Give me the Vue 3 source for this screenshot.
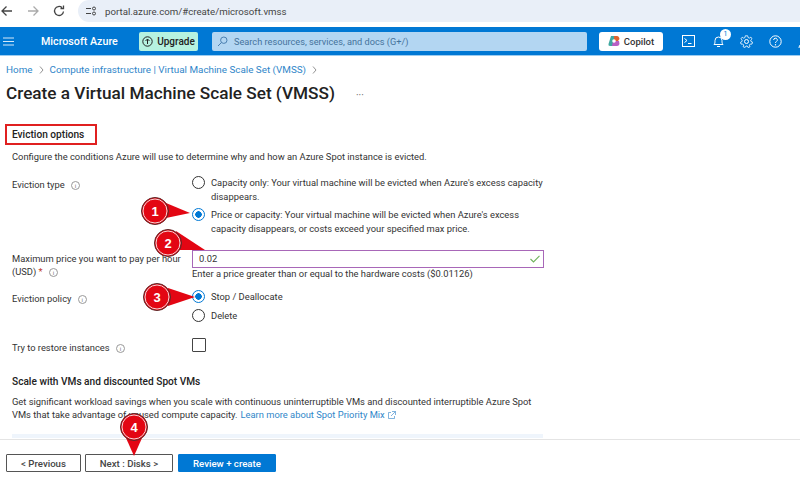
<script setup>
const crumbs = ['Home', 'Compute infrastructure | Virtual Machine Scale Set (VMSS)']
const callouts = [
  { n: 1, cx: 155, cy: 211, arrow: '166,203 190,213 166,218' },
  { n: 2, cx: 168, cy: 243, arrow: '176,231 205,250 178,250' },
  { n: 3, cx: 157, cy: 297, arrow: '168,288 195,297 168,306' },
  { n: 4, cx: 134, cy: 427, arrow: '126,438 134,456 142,438' },
]
</script>

<template>
  <div class="page">
    <div class="browser">
      <svg width="14" height="14" viewBox="0 0 14 14"><path d="M12 7H2M6.500 2.500 2 7l4.500 4.500" fill="none" stroke="#444" stroke-width="1.300" /></svg>
      <svg width="14" height="14" viewBox="0 0 14 14"><path d="M2 7h10M7.500 2.500 12 7l-4.500 4.500" fill="none" stroke="#aaa" stroke-width="1.300" /></svg>
      <svg width="14" height="14" viewBox="0 0 14 14"><path d="M11.500 7.500A4.500 4.500 0 1 1 10 3.600M11.500 1.500v3h-3" fill="none" stroke="#444" stroke-width="1.300" /></svg>
      <div class="address">
        <svg width="12" height="12" viewBox="0 0 12 12"><path d="M1 3.500h5M1 8.500h5" stroke="#444" stroke-width="1.200" /><circle cx="9" cy="3.500" r="1.500" fill="none" stroke="#444" /><circle cx="9" cy="8.500" r="1.500" fill="none" stroke="#444" /></svg>
        <span>portal.azure.com/#create/microsoft.vmss</span>
      </div>
    </div>

    <header class="topbar">
      <svg class="menu" width="11" height="9" viewBox="0 0 11 9"><path d="M0 1h11M0 4.500h11M0 8h11" stroke="#d5e8f8" stroke-width="1" /></svg>
      <div class="brand">Microsoft Azure</div>
      <div class="upgrade">
        <svg width="11" height="11" viewBox="0 0 11 11"><circle cx="5.500" cy="5.500" r="4.700" fill="none" stroke="#222" /><path d="M5.500 8V3.200M3.500 5l2-2 2 2" fill="none" stroke="#222" /></svg>
        Upgrade
      </div>
      <div class="search">
        <svg width="11" height="11" viewBox="0 0 11 11"><circle cx="6.800" cy="4.200" r="3.200" fill="none" stroke="#4a7fb0" /><path d="M4.500 6.500 1 10" stroke="#4a7fb0" /></svg>
        Search resources, services, and docs (G+/)
      </div>
      <div class="copilot">
        <svg width="12" height="12" viewBox="0 0 12 12">
          <path d="M3 1h4L5 11H2Q0 11 .500 9Z" fill="#3fa8a0" />
          <path d="M6 1h3q2 0 2.500 3L10 6H6Z" fill="#e0632e" />
          <path d="M5 6h6l.500 3Q11 11 9 11H4Z" fill="#b85fc4" />
          <circle cx="6" cy="6" r="1.800" fill="#fff" />
        </svg>
        Copilot
      </div>
      <div class="tools">
        <svg width="13" height="12" viewBox="0 0 13 12"><rect x=".5" y=".5" width="12" height="11" fill="none" stroke="#fff" /><path d="m2.500 3.500 2.500 2-2.500 2M6 8.500h3.500" fill="none" stroke="#fff" /></svg>
        <div class="bell">
          <svg width="11" height="13" viewBox="0 0 11 13"><path d="M1 9.500c1-1 1-2 1-4a3.500 3.500 0 0 1 7 0c0 2 0 3 1 4ZM4 11.500h3" fill="none" stroke="#fff" /></svg>
          <span class="badge">1</span>
        </div>
        <svg width="13" height="13" viewBox="0 0 13 13"><circle cx="6.500" cy="6.500" r="2" fill="none" stroke="#fff" /><path d="M5.300.8h2.400l.3 1.700 1.400.6 1.500-1 1.100 1.700-1.300 1.300.3 1.400 1.500.6-.5 2-1.700-.1-.9 1.200.6 1.600-2 .7-.8-1.500H6l-.9 1.500-2-.8.6-1.600-1-1.100-1.700.1L.5 7.300 2 6.500l.2-1.400L1 3.800l1.200-1.600 1.500 1 1.300-.7Z" fill="none" stroke="#fff" stroke-width=".8" /></svg>
        <svg width="13" height="13" viewBox="0 0 13 13"><circle cx="6.500" cy="6.500" r="5.700" fill="none" stroke="#fff" /><path d="M4.700 5a1.800 1.800 0 1 1 2.700 1.500c-.7.400-.9.800-.9 1.500" fill="none" stroke="#fff" /><circle cx="6.500" cy="9.800" r=".7" fill="#fff" /></svg>
        <svg width="13" height="13" viewBox="0 0 13 13"><circle cx="6.500" cy="4" r="3" fill="none" stroke="#fff" /><path d="M1 13c0-3 2.500-5 5.500-5s5.500 2 5.500 5" fill="none" stroke="#fff" /></svg>
      </div>
    </header>

    <main class="content">
      <nav class="crumbs">
        <template v-for="c in crumbs" :key="c">
          <a>{{ c }}</a>
          <svg width="5" height="8" viewBox="0 0 5 8"><path d="m1 .5 3 3.500-3 3.500" fill="none" stroke="#777" stroke-width=".8" /></svg>
        </template>
      </nav>
      <div class="title-row">
        <h1>Create a Virtual Machine Scale Set (VMSS)</h1>
        <span class="dots">···</span>
      </div>

      <h2 class="boxed">Eviction options</h2>
      <p class="desc">Configure the conditions Azure will use to determine why and how an Azure Spot instance is evicted.</p>

      <div class="form">
        <div class="label first">Eviction type <i class="info">i</i></div>
        <div class="radios">
          <label class="radio"><span class="dot" /><span>Capacity only: Your virtual machine will be evicted when Azure's excess capacity disappears.</span></label>
          <label class="radio on"><span class="dot" /><span>Price or capacity: Your virtual machine will be evicted when Azure's excess capacity disappears, or costs exceed your specified max price.</span></label>
        </div>

        <div class="label price">
          <div>Maximum price you want to pay per hour</div>
          <div>(USD) <b>*</b> <i class="info">i</i></div>
        </div>
        <div>
          <div class="input">
            <span>0.02</span>
            <svg width="10" height="8" viewBox="0 0 10 8"><path d="m.5 4 3 3L9.500 .8" fill="none" stroke="#6fb35c" stroke-width="1.100" /></svg>
          </div>
          <div class="hint">Enter a price greater than or equal to the hardware costs ($0.01126)</div>
        </div>

        <div class="label policy">Eviction policy <i class="info">i</i></div>
        <div class="radios tight">
          <label class="radio on"><span class="dot" /><span>Stop / Deallocate</span></label>
          <label class="radio"><span class="dot" /><span>Delete</span></label>
        </div>

        <div class="label restore">Try to restore instances <i class="info">i</i></div>
        <div class="check" />
      </div>

      <h2 class="plain">Scale with VMs and discounted Spot VMs</h2>
      <div class="para">
        <div>Get significant workload savings when you scale with continuous uninterruptible VMs and discounted interruptible Azure Spot</div>
        <div class="para-end">
          <span>VMs that take advantage of unused compute capacity.</span>
          <a>Learn more about Spot Priority Mix</a>
          <svg width="8" height="8" viewBox="0 0 8 8"><path d="M3 1.500H.5v6h6V5M4 .5h3.500V4M7.500 .5 3 5" fill="none" stroke="#4c94d0" stroke-width=".7" /></svg>
        </div>
      </div>
      <div class="panel" />
    </main>

    <footer class="footer">
      <button class="btn prev">&lt; Previous</button>
      <button class="btn next">Next : Disks &gt;</button>
      <button class="btn primary">Review + create</button>
    </footer>

    <svg class="marks" width="800" height="480" viewBox="0 0 800 480">
      <g v-for="m in callouts" :key="m.n">
        <polygon :points="m.arrow" fill="#e30613" />
        <circle :cx="m.cx" :cy="m.cy" r="13.500" fill="#e30613" stroke="#5a2a2a" stroke-width="1" />
        <circle :cx="m.cx" :cy="m.cy" r="12" fill="#e30613" stroke="#f5d5d5" stroke-width="1" />
        <text :x="m.cx" :y="m.cy + 5" text-anchor="middle" class="num">{{ m.n }}</text>
      </g>
    </svg>
  </div>
</template>

<style>
html, body { margin: 0; overflow: hidden; background: #fff; }
</style>

<style scoped>
.page {
  position: relative;
  width: 800px;
  height: 480px;
  display: flex;
  flex-direction: column;
  overflow: hidden;
  font-family: Roboto, "Noto Sans", sans-serif;
  font-size: 9.350px;
  color: #333;
}
.browser {
  height: 22px;
  margin-bottom: 5px;
  display: flex;
  align-items: center;
  gap: 12px;
  flex-shrink: 0;
}
.address {
  flex: 1;
  height: 22px;
  background: #e9eff8;
  border-radius: 12px 0 0 12px;
  display: flex;
  align-items: center;
  gap: 8px;
  padding-left: 7px;
  font-size: 9.700px;
  color: #444;
}
.topbar {
  height: 29px;
  background: #0078d4;
  border-bottom: 1px solid #9cccf0;
  box-sizing: border-box;
  display: flex;
  align-items: center;
  flex-shrink: 0;
  color: #fff;
}
.topbar > * { flex-shrink: 0; }
.menu { margin-left: 3px; }
.brand {
  margin-left: 27px;
  width: 98px;
  font-size: 10.700px;
  font-weight: 500;
}
.upgrade {
  width: 59px;
  height: 19px;
  background: #b6f2e0;
  border-radius: 2px;
  display: flex;
  align-items: center;
  justify-content: center;
  gap: 4px;
  color: #222;
  font-size: 10px;
  font-weight: 500;
}
.search {
  margin-left: 14px;
  width: 375px;
  height: 19px;
  background: #b3d6f2;
  border-radius: 2px;
  display: flex;
  align-items: center;
  gap: 6px;
  padding-left: 5px;
  box-sizing: border-box;
  color: #45739c;
  font-size: 9.200px;
}
.copilot {
  margin-left: 12px;
  width: 64px;
  height: 19px;
  background: #fff;
  border-radius: 3px;
  display: flex;
  align-items: center;
  justify-content: center;
  gap: 4px;
  color: #333;
  font-size: 9.500px;
  font-weight: 500;
}
.tools {
  display: flex;
  align-items: center;
  gap: 16px;
  margin-left: 19px;
}
.tools > * { flex-shrink: 0; }
.bell { position: relative; display: flex; margin-left: 2px; }
.badge {
  position: absolute;
  top: -6px;
  right: -7px;
  width: 11px;
  height: 11px;
  border-radius: 50%;
  background: #fff;
  color: #0078d4;
  font-size: 7px;
  line-height: 11px;
  text-align: center;
}
.content {
  flex: 1;
  min-height: 0;
  overflow: hidden;
  padding-left: 6px;
}
.crumbs {
  display: flex;
  align-items: center;
  gap: 6px;
  margin-top: 7px;
  height: 13px;
  font-size: 9.850px;
}
a { color: #2f86c9; }
.title-row {
  display: flex;
  align-items: center;
  margin-top: 4px;
  height: 25px;
}
h1 {
  margin: 0;
  font-size: 17.200px;
  font-weight: 500;
  color: #222;
  white-space: nowrap;
}
.dots { margin-left: 21px; padding-top: 5px; color: #666; font-size: 10px; }
.boxed {
  display: block;
  margin: 19px 0 0 -1px;
  padding: 0 5px;
  width: 92px;
  height: 21px;
  line-height: 17px;
  box-sizing: border-box;
  border: 2px solid #e02020;
  font-size: 10.150px;
  font-weight: 500;
  color: #222;
}
.desc { margin: 5px 0 0 6px; height: 13px; line-height: 13px; }
.form {
  display: grid;
  grid-template-columns: 180px 352px;
  margin: 13px 0 0 6px;
  line-height: 13px;
}
.label.first { padding-top: 2px; }
.label b { color: #c0392b; font-weight: 400; }
.info {
  display: inline-block;
  width: 7px;
  height: 7px;
  margin-left: 4px;
  border: 1px solid #999;
  border-radius: 50%;
  font: 6px/7px Roboto, sans-serif;
  text-align: center;
  color: #777;
}
.radios {
  display: flex;
  flex-direction: column;
  gap: 5px;
  min-height: 74px;
  line-height: 13.500px;
}
.radios.tight { min-height: 0; padding-top: 10px; }
.radio { display: flex; gap: 6px; }
.dot {
  width: 11px;
  height: 11px;
  flex-shrink: 0;
  border: 1px solid #333;
  border-radius: 50%;
}
.radio.on .dot {
  border-color: #0078d4;
  background: radial-gradient(circle, #0078d4 0 3px, #fff 3.500px);
}
.input {
  width: 352px;
  height: 18px;
  box-sizing: border-box;
  border: 1px solid #a867b8;
  display: flex;
  align-items: center;
  justify-content: space-between;
  padding: 0 3px 1px 6px;
  color: #333;
}
.hint { margin-top: -1px; }
.label.price { padding-top: 2px; }
.label.policy { padding-top: 12px; }
.label.restore { padding-top: 19px; }
.check {
  width: 12px;
  height: 12px;
  margin-top: 16px;
  border: 1px solid #444;
  border-radius: 1px;
}
.plain {
  margin: 21px 0 0 6px;
  line-height: 13px;
  font-size: 10.150px;
  font-weight: 500;
  color: #222;
}
.para { margin: 7px 0 0 6px; width: 530px; line-height: 13px; white-space: nowrap; }
.para-end { display: flex; align-items: center; gap: 3px; }
.panel {
  margin: 13px 0 0 6px;
  width: 531px;
  height: 4px;
  background: #eff5fc;
}
.footer {
  height: 41px;
  flex-shrink: 0;
  border-top: 1px solid #e4e4e4;
  box-sizing: border-box;
  display: flex;
  align-items: flex-start;
  gap: 4px;
  padding: 14px 0 0 6px;
}
.btn {
  height: 18px;
  padding: 0;
  background: #fff;
  border: 1px solid #555;
  border-radius: 1px;
  font: 500 9.650px Roboto, sans-serif;
  color: #444;
}
.prev { width: 75px; }
.next { width: 88px; }
.primary {
  width: 98px;
  margin-left: 1px;
  background: #0078d4;
  border-color: #0078d4;
  color: #fff;
}
.marks {
  position: absolute;
  top: 0;
  left: 0;
  pointer-events: none;
}
.num {
  fill: #fff;
  font: 700 13px "Liberation Sans", sans-serif;
}
</style>
